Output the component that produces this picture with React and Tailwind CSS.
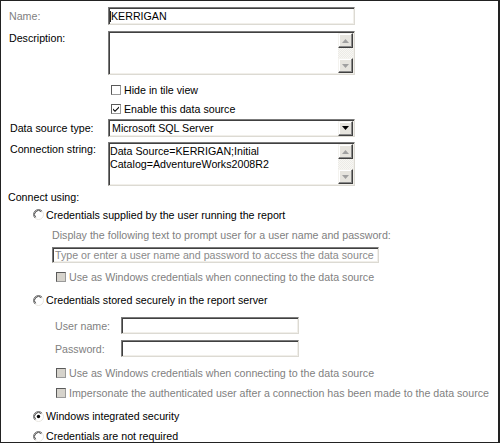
import React from "react";

const insetBox =
  "border border-t-[#7b7b7b] border-l-[#7b7b7b] border-r-[#dcdad3] border-b-[#dcdad3] shadow-[inset_1px_1px_0_#404040,inset_-1px_-1px_0_#f1efea] bg-white";

function Arrow({ dir = "down", color = "#000" }) {
  return (
    <svg width="7" height="4" viewBox="0 0 7 4">
      {dir === "down" ? (
        <polygon points="0,0 7,0 3.5,4" fill={color} />
      ) : (
        <polygon points="0,4 7,4 3.5,0" fill={color} />
      )}
    </svg>
  );
}

function SbButton({ dir, color }) {
  return (
    <div className="w-[15px] h-[15px] bg-[#e6e4de] border border-t-[#f4f3ef] border-l-[#f4f3ef] border-r-[#404040] border-b-[#404040] shadow-[inset_-1px_-1px_0_#8a8a8a,inset_1px_1px_0_#ffffff] flex items-center justify-center">
      <Arrow dir={dir} color={color} />
    </div>
  );
}

function TextArea({ lines = [] }) {
  return (
    <div className={`w-[247px] h-[44px] flex ${insetBox}`}>
      <div className="flex-1 pl-[1px] pt-[2px] leading-[13px] text-black">
        {lines.map((l, i) => (
          <div key={i}>{l}</div>
        ))}
      </div>
      <div className="w-[15px] flex flex-col mt-[1px] mb-[1px] mr-[1px]">
        <SbButton dir="up" color="#a0a0a0" />
        <div className="flex-1 bg-[repeating-conic-gradient(#ecebe6_0_25%,#f8f7f4_0_50%)] bg-[length:2px_2px]" />
        <SbButton dir="down" color="#a0a0a0" />
      </div>
    </div>
  );
}

function Checkbox({ checked, disabled }) {
  return (
    <div
      className={`w-[10px] h-[10px] border border-t-[#5a5a5a] border-l-[#5a5a5a] border-r-[#9a9a9a] border-b-[#9a9a9a] flex items-center justify-center ${
        disabled ? "bg-[#d6d3cc]" : "bg-white"
      }`}
    >
      {checked && (
        <svg width="8" height="8" viewBox="0 0 8 8">
          <path d="M1 3.5 L3 5.5 L7 1.5 L7 3 L3 7 L1 5 Z" fill="#000" />
        </svg>
      )}
    </div>
  );
}

function Radio({ checked }) {
  return (
    <svg width="11" height="11" viewBox="0 0 11 11">
      <circle cx="5.5" cy="5.5" r="5" fill="#fff" />
      <path d="M1.96 9.04 A5 5 0 0 1 9.04 1.96" stroke="#7b7b7b" strokeWidth="1" fill="none" />
      <path d="M2.67 8.33 A4 4 0 0 1 8.33 2.67" stroke="#404040" strokeWidth="1" fill="none" />
      <path d="M9.04 1.96 A5 5 0 0 1 1.96 9.04" stroke="#e8e6e0" strokeWidth="1" fill="none" />
      {checked && <circle cx="5.5" cy="5.5" r="1.7" fill="#000" />}
    </svg>
  );
}

export default function App() {
  return (
    <div className="w-[500px] h-[443px] bg-white border border-[#222] border-r-2 overflow-hidden font-['Liberation_Sans',Arial,sans-serif] text-[10.67px] leading-[12px] text-black">
      {/* Name */}
      <div className="flex items-center h-[18px] mt-[6px] pl-[8px]">
        <div className="w-[99px] text-[#7f7f7f]">Name:</div>
        <div className={`w-[247px] h-[18px] flex items-center pl-[1px] ${insetBox}`}>
          <span className="w-[1px] h-[11px] bg-[#222]" />
          <span>KERRIGAN</span>
        </div>
      </div>
      {/* Description */}
      <div className="flex mt-[6px] pl-[8px]">
        <div className="w-[99px] pt-[1px]">Description:</div>
        <TextArea />
      </div>
      {/* checkboxes */}
      <div className="flex items-center h-[19px] mt-[5px] pl-[110px] gap-[3px]">
        <Checkbox />
        <span>Hide in tile view</span>
      </div>
      <div className="flex items-center h-[19px] pl-[110px] gap-[3px]">
        <Checkbox checked />
        <span>Enable this data source</span>
      </div>
      {/* Data source type */}
      <div className="flex items-center h-[18px] mt-[1px] pl-[9px]">
        <div className="w-[98px]">Data source type:</div>
        <div className={`w-[247px] h-[18px] flex items-center ${insetBox}`}>
          <span className="flex-1 pl-[3px]">Microsoft SQL Server</span>
          <div className="mr-[1px]">
            <SbButton dir="down" color="#000" />
          </div>
        </div>
      </div>
      {/* Connection string */}
      <div className="flex mt-[5px] pl-[9px]">
        <div className="w-[98px] pt-[1px]">Connection string:</div>
        <TextArea lines={["Data Source=KERRIGAN;Initial", "Catalog=AdventureWorks2008R2"]} />
      </div>
      {/* Connect using */}
      <div className="h-[12px] mt-[5px] pl-[7px]">Connect using:</div>
      <div className="flex items-center h-[13px] mt-[5px] pl-[32px] gap-[2px]">
        <Radio />
        <span>Credentials supplied by the user running the report</span>
      </div>
      <div className="h-[12px] mt-[8px] pl-[51px] text-[#7f7f7f]">
        Display the following text to prompt user for a user name and password:
      </div>
      <div className="mt-[6px] pl-[51px]">
        <div className={`w-[327px] h-[16px] flex items-center pl-[2px] text-[#8a8a8a] ${insetBox}`}>
          Type or enter a user name and password to access the data source
        </div>
      </div>
      <div className="flex items-center h-[12px] mt-[8px] pl-[55px] gap-[3px] text-[#7f7f7f]">
        <Checkbox disabled />
        <span>Use as Windows credentials when connecting to the data source</span>
      </div>
      <div className="flex items-center h-[12px] mt-[11px] pl-[32px] gap-[2px]">
        <Radio />
        <span>Credentials stored securely in the report server</span>
      </div>
      <div className="flex items-center h-[17px] mt-[11px] pl-[54px] text-[#7f7f7f]">
        <div className="w-[66px]">User name:</div>
        <div className={`w-[178px] h-[17px] ${insetBox}`} />
      </div>
      <div className="flex items-center h-[17px] mt-[6px] pl-[54px] text-[#7f7f7f]">
        <div className="w-[66px]">Password:</div>
        <div className={`w-[178px] h-[17px] ${insetBox}`} />
      </div>
      <div className="flex items-center h-[12px] mt-[10px] pl-[55px] gap-[3px] text-[#7f7f7f]">
        <Checkbox disabled />
        <span>Use as Windows credentials when connecting to the data source</span>
      </div>
      <div className="flex items-center h-[12px] mt-[8px] pl-[55px] gap-[3px] text-[#7f7f7f]">
        <Checkbox disabled />
        <span>Impersonate the authenticated user after a connection has been made to the data source</span>
      </div>
      <div className="flex items-center h-[12px] mt-[11px] pl-[32px] gap-[2px]">
        <Radio checked />
        <span>Windows integrated security</span>
      </div>
      <div className="flex items-center h-[12px] mt-[8px] pl-[32px] gap-[2px]">
        <Radio />
        <span>Credentials are not required</span>
      </div>
    </div>
  );
}
